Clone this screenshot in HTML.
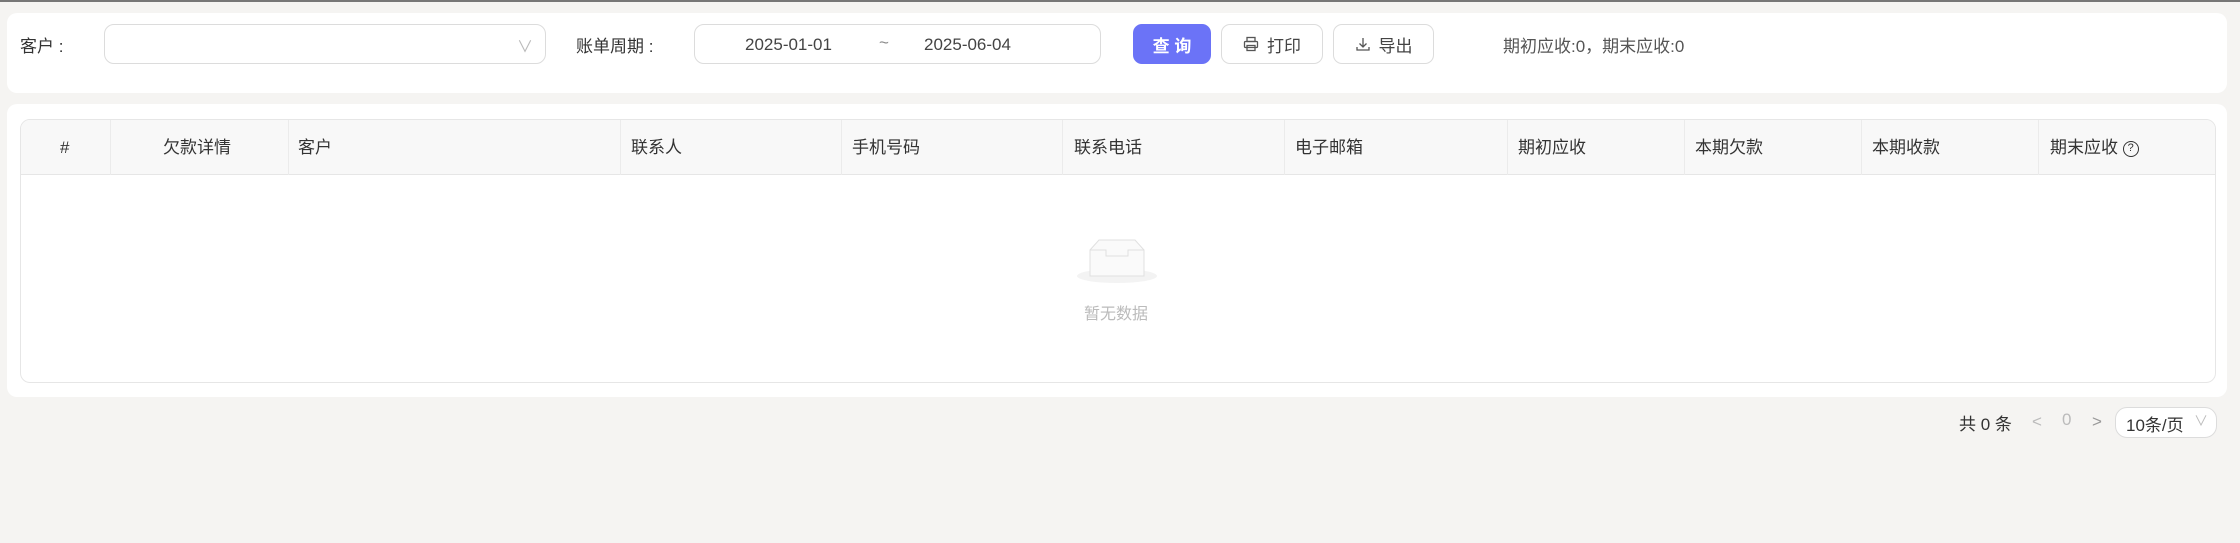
<!DOCTYPE html>
<html><head><meta charset="utf-8"><style>
*{box-sizing:border-box;margin:0;padding:0}
body{width:2240px;height:543px;background:#f5f4f2;font-family:"Liberation Sans","Noto Sans CJK SC",sans-serif;font-size:17px;color:#333;position:relative;overflow:hidden}
.topline{position:absolute;left:0;top:0;width:2240px;height:2px;background:#777}
.abs{position:absolute}
.card{position:absolute;background:#fff;border-radius:10px}
.box{position:absolute;border:1px solid #dcdcdc;border-radius:10px;background:#fff}
.btn{position:absolute;border:1px solid #dcdcdc;border-radius:9px;background:#fff;display:flex;align-items:center;justify-content:center;gap:8px;height:40px;top:24px;color:#444}
.th{position:absolute;top:0;height:55px;line-height:55px;font-size:17px;color:#333;white-space:nowrap}
.vl{position:absolute;top:0;width:1px;height:55px;background:#ebebeb}
</style></head><body>
<div class="topline"></div>
<div class="card" style="left:7px;top:13px;width:2220px;height:80px"></div>
<div class="abs" style="left:20px;top:32px">客户 :</div>
<div class="box" style="left:104px;top:24px;width:442px;height:40px"><span class="abs" style="left:412px;top:8px;color:#bbb;font-size:16px">∨</span></div>
<div class="abs" style="left:576px;top:32px">账单周期 :</div>
<div class="box" style="left:694px;top:24px;width:407px;height:40px">
<span class="abs" style="left:50px;top:10px;color:#444">2025-01-01</span>
<span class="abs" style="left:184px;top:8px;color:#888">~</span>
<span class="abs" style="left:229px;top:10px;color:#444">2025-06-04</span></div>
<div class="btn" style="left:1133px;width:78px;background:#6b73f7;border-color:#6b73f7;color:#fff;font-weight:bold">查 询</div>
<div class="btn" style="left:1221px;width:102px"><svg width="16" height="16" viewBox="0 0 16 16" fill="none" stroke="#555" stroke-width="1.3"><rect x="4" y="1.5" width="8" height="4"/><rect x="1.5" y="5.5" width="13" height="6" rx="1"/><rect x="4" y="9.5" width="8" height="5"/></svg>打印</div>
<div class="btn" style="left:1333px;width:101px"><svg width="16" height="16" viewBox="0 0 16 16" fill="none" stroke="#555" stroke-width="1.3"><path d="M8 2v9M4.5 7.5L8 11l3.5-3.5M2 11v3h12v-3"/></svg>导出</div>
<div class="abs" style="left:1503px;top:32px;color:#555">期初应收:0，期末应收:0</div>

<div class="card" style="left:7px;top:104px;width:2220px;height:293px"></div>
<div class="abs" style="left:20px;top:119px;width:2196px;height:264px;border:1px solid #e6e6e6;border-radius:10px;overflow:hidden">
<div class="abs" style="left:0;top:0;width:100%;height:55px;background:#f8f8f8;border-bottom:1px solid #e6e6e6"></div>
<div class="vl" style="left:89px"></div><div class="vl" style="left:267px"></div><div class="vl" style="left:599px"></div><div class="vl" style="left:820px"></div><div class="vl" style="left:1041px"></div><div class="vl" style="left:1263px"></div><div class="vl" style="left:1486px"></div><div class="vl" style="left:1663px"></div><div class="vl" style="left:1840px"></div><div class="vl" style="left:2017px"></div>
<div class="th" style="left:39px">#</div>
<div class="th" style="left:142px">欠款详情</div>
<div class="th" style="left:277px">客户</div>
<div class="th" style="left:610px">联系人</div>
<div class="th" style="left:831px">手机号码</div>
<div class="th" style="left:1053px">联系电话</div>
<div class="th" style="left:1274px">电子邮箱</div>
<div class="th" style="left:1497px">期初应收</div>
<div class="th" style="left:1674px">本期欠款</div>
<div class="th" style="left:1851px">本期收款</div>
<div class="th" style="left:2029px">期末应收 <span style="display:inline-block;width:16px;height:16px;border:1.5px solid #333;border-radius:50%;font-size:11px;line-height:13px;text-align:center;vertical-align:2px">?</span></div>
<svg class="abs" style="left:1056px;top:118px" width="80" height="46" viewBox="0 0 80 46"><ellipse cx="40" cy="38" rx="40" ry="7" fill="#f3f3f3"/><path d="M13 12L22 2h36l9 10v26H13z" fill="#fafafa" stroke="#e0e0e0"/><path d="M13 12h16v6h22v-6h16" fill="none" stroke="#e0e0e0"/></svg>
<div class="abs" style="left:1063px;top:180px;color:#bbb;font-size:16px">暂无数据</div>
</div>

<div class="abs" style="left:1959px;top:410px;color:#333">共 0 条</div>
<div class="abs" style="left:2032px;top:412px;color:#bbb">&lt;</div>
<div class="abs" style="left:2062px;top:410px;color:#bbb">0</div>
<div class="abs" style="left:2092px;top:412px;color:#999">&gt;</div>
<div class="box" style="left:2115px;top:407px;width:102px;height:31px;border-radius:12px"><span class="abs" style="left:10px;top:3px;color:#333">10条/页</span><span class="abs" style="left:78px;top:3px;color:#bbb;font-size:14px">∨</span></div>
</body></html>
